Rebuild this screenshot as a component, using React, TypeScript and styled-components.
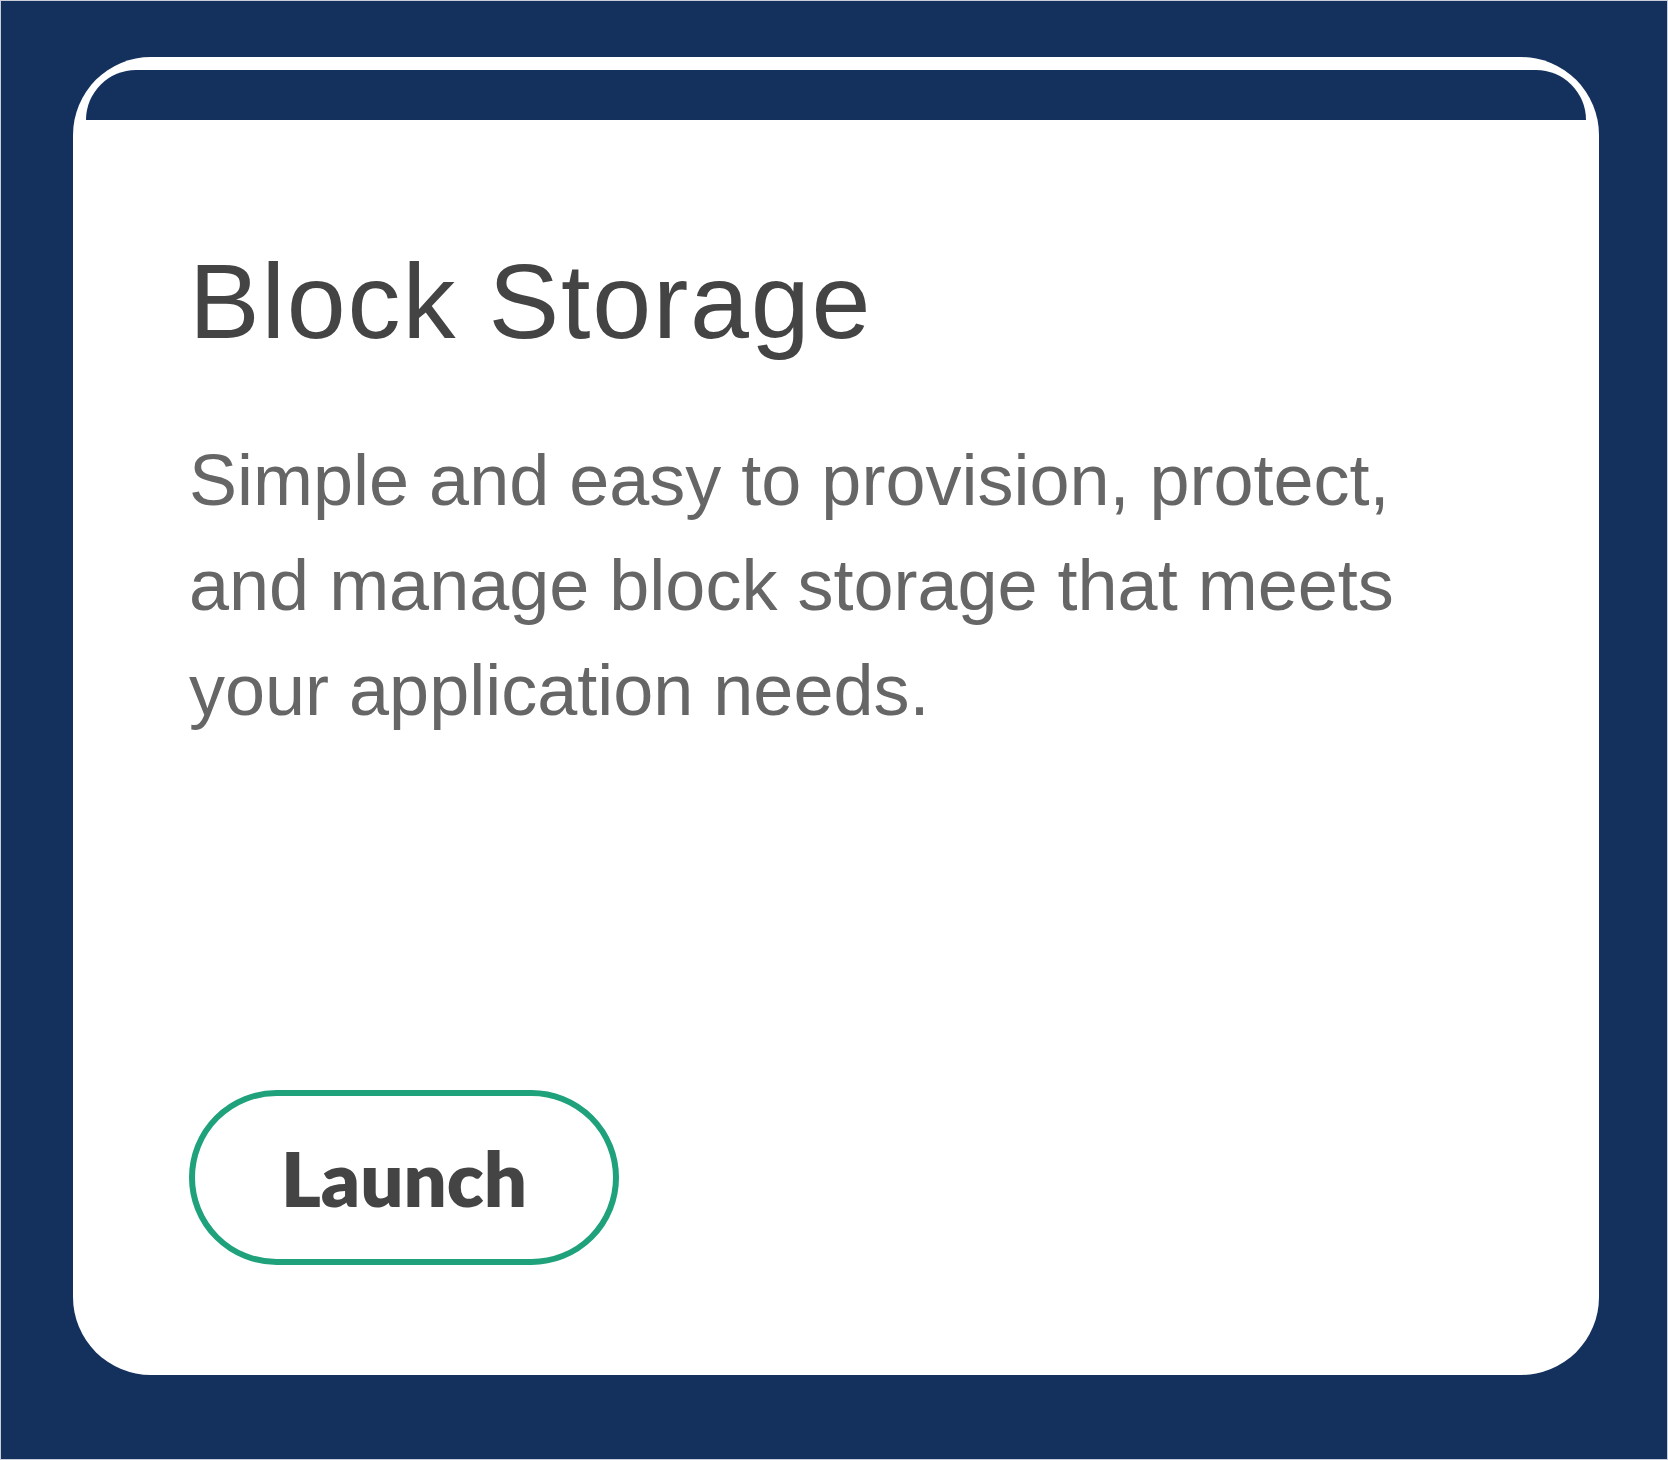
import React from "react";
import styled, { createGlobalStyle } from "styled-components";

const GlobalStyle = createGlobalStyle`
  html, body {
    margin: 0;
    padding: 0;
    background: #14315d;
  }
  * { box-sizing: border-box; }
`;

const Page = styled.div`
  width: 1668px;
  height: 1460px;
  background: #14315d;
  border: 1px solid #c9ced8;
  padding: 56px 68px 84px 72px;
  display: flex;
`;

const Card = styled.div`
  width: 1526px;
  height: 1318px;
  background: #ffffff;
  border-radius: 78px;
  padding: 13px 13px 0 13px;
  display: flex;
  flex-direction: column;
`;

const Band = styled.div`
  height: 50px;
  flex: none;
  background: #14315d;
  border-radius: 65px 65px 0 0;
`;

const Content = styled.div`
  flex: 1;
  display: flex;
  flex-direction: column;
  align-items: flex-start;
  padding: 128px 0 110px 103px;
  font-family: "Liberation Sans", Arial, sans-serif;
`;

const Title = styled.h1`
  margin: 0;
  font-size: 106px;
  line-height: 106px;
  font-weight: 400;
  letter-spacing: 1.8px;
  color: #444444;
`;

const Description = styled.p`
  margin: 74px 0 0 0;
  width: 1260px;
  font-size: 72px;
  line-height: 105px;
  color: #666666;
`;

const LaunchButton = styled.button`
  margin-top: auto;
  width: 430px;
  height: 175px;
  border: 6px solid #1fa27b;
  border-radius: 88px;
  background: #ffffff;
  color: #444444;
  font-family: "Lato", "Liberation Sans", sans-serif;
  font-weight: 800;
  font-size: 76px;
  line-height: 1;
  padding: 0;
  display: flex;
  align-items: center;
  justify-content: center;
  cursor: pointer;
`;

export default function App() {
  return (
    <>
      <GlobalStyle />
      <Page>
        <Card>
          <Band />
          <Content>
            <Title>Block Storage</Title>
            <Description>
              Simple and easy to provision, protect, and manage block storage
              that meets your application needs.
            </Description>
            <LaunchButton>Launch</LaunchButton>
          </Content>
        </Card>
      </Page>
    </>
  );
}
